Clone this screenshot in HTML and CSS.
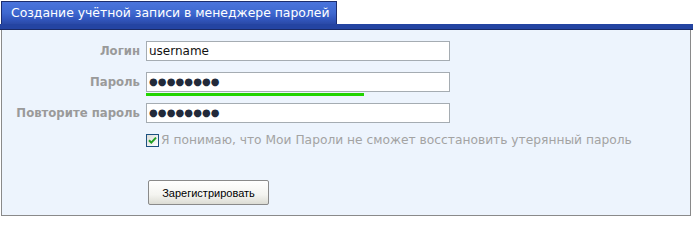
FILE: index.html
```html
<!DOCTYPE html>
<html lang="ru">
<head>
<meta charset="utf-8">
<title>Создание учётной записи</title>
<link rel="stylesheet" href="styles.css">
</head>
<body>
<div class="page">
  <div class="tabs"><div class="tab">Создание учётной записи в менеджере паролей</div></div>
  <div class="bar"></div>
  <div class="panel">
    <div class="form">
      <div class="label">Логин</div>
      <div class="field"><div class="input">username</div></div>
      <div class="label">Пароль</div>
      <div class="field">
        <div class="input dots">●●●●●●●●</div>
        <div class="strength"><div class="strength-fill" style="width:218px"></div></div>
      </div>
      <div class="label">Повторите пароль</div>
      <div class="field"><div class="input dots">●●●●●●●●</div></div>
    </div>
    <div class="agree">
      <span class="check"><svg width="9" height="9" viewBox="0 0 9 9"><path d="M1 4.2 L3.3 6.6 L8 1.6" fill="none" stroke="#21a121" stroke-width="2"/></svg></span>
      <span class="agree-text">Я понимаю, что Мои Пароли не сможет восстановить утерянный пароль</span>
    </div>
    <div class="actions"><button class="btn">Зарегистрировать</button></div>
  </div>
</div>
</body>
</html>
```
FILE: styles.css
```css
html, body { margin: 0; padding: 0; background: #ffffff; }
.page { width: 693px; font-family: "DejaVu Sans", Verdana, sans-serif; }
.tabs { padding: 1px 0 0 1px; height: 23px; display: flex; }
.tab {
  height: 23px;
  box-sizing: border-box;
  border: 1px solid #1c2d6e;
  border-bottom: none;
  padding: 0 7px 0 9px;
  background: linear-gradient(#4a74dc 0%, #3e68d0 50%, #3358c0 75%, #2a4aa8 100%);
  color: #ffffff;
  font-size: 12.4px;
  line-height: 21px;
  white-space: nowrap;
}
.bar { height: 5px; background: #2444a2; border-bottom: 1px solid #1a2a66; }
.panel {
  width: 690px;
  margin-left: 1px;
  box-sizing: border-box;
  background: #edf4fd;
  border: 1px solid #8a8a8a;
  border-top: none;
  padding: 11px 0 10px 0;
}
.form {
  display: grid;
  grid-template-columns: 137px 304px;
  grid-auto-rows: 20px;
  column-gap: 6px;
  row-gap: 11px;
  margin-left: 1px;
}
.label {
  text-align: right;
  font-weight: bold;
  font-size: 11.7px;
  color: #9a9a9a;
  align-self: center;
  white-space: nowrap;
}
.field { height: 20px; }
.input {
  height: 20px;
  box-sizing: border-box;
  border: 1px solid #a5acb2;
  background: #ffffff;
  font-size: 12px;
  line-height: 18px;
  padding-left: 2px;
  color: #111111;
}
.dots { font-size: 10px; letter-spacing: 0.1px; color: #222a3a; padding-left: 2px; }
.strength { height: 3px; margin-top: 1px; }
.strength-fill { height: 3px; background: #22d400; }
.agree {
  display: flex;
  align-items: center;
  margin: 10px 0 0 144px;
  height: 14px;
}
.check {
  width: 13px;
  height: 13px;
  box-sizing: border-box;
  border: 1px solid #1c5180;
  background: linear-gradient(135deg, #dcdcd7, #ffffff);
  display: flex;
  align-items: center;
  justify-content: center;
}
.agree-text {
  margin-left: 2px;
  font-size: 12.25px;
  color: #a3a3a3;
  white-space: nowrap;
}
.actions { margin: 33px 0 0 146px; height: 25px; }
.btn {
  width: 121px;
  height: 25px;
  margin: 0;
  padding: 0;
  border: 1px solid #8a8a8a;
  border-radius: 2px;
  background: linear-gradient(#ffffff 0%, #f4f4f0 60%, #dcdcd4 100%);
  font-family: "Liberation Sans", Arial, sans-serif;
  font-size: 11px;
  color: #000000;
}
```
